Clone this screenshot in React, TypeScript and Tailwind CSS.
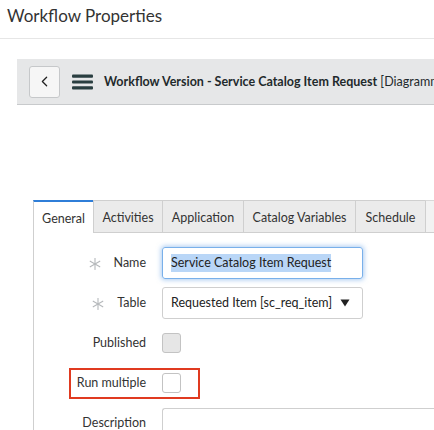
import { ChevronLeft } from 'lucide-react';

// ============================================================================
// Small pieces
// ============================================================================

function Asterisk() {
  return (
    <svg width="12" height="12" viewBox="0 0 12 12" className="shrink-0">
      <g stroke="#b5b8bb" strokeWidth="1.1" strokeLinecap="round">
        <line x1="6" y1="0.5" x2="6" y2="11.5" />
        <line x1="1.2" y1="3.2" x2="10.8" y2="8.8" />
        <line x1="1.2" y1="8.8" x2="10.8" y2="3.2" />
      </g>
    </svg>
  );
}

function Hamburger() {
  return (
    <svg width="21" height="16" viewBox="0 0 21 16">
      <rect x="0" y="0.5" width="21" height="3.2" rx="1" fill="#293e40" />
      <rect x="0" y="6.4" width="21" height="3.2" rx="1" fill="#293e40" />
      <rect x="0" y="12.3" width="21" height="3.2" rx="1" fill="#293e40" />
    </svg>
  );
}

function Triangle() {
  return (
    <svg width="10" height="8" viewBox="0 0 10 8">
      <path d="M0.5 0.5 L9.5 0.5 L5 7.5 Z" fill="#222" />
    </svg>
  );
}

const tabs = [
  { name: 'Activities', w: 'w-[69px]' },
  { name: 'Application', w: 'w-[81px]' },
  { name: 'Catalog Variables', w: 'w-[112px]' },
  { name: 'Schedule', w: 'w-[70px]' },
];

function Label({ text, required }: { text: string; required?: boolean }) {
  return (
    <div className="flex items-center justify-end gap-[13px] pt-[1px] text-[12.5px] text-[#333]">
      {required && <Asterisk />}
      <span>{text}</span>
    </div>
  );
}

// ============================================================================
// Component
// ============================================================================

export default function App() {
  return (
    <div
      className="w-[434px] h-[430px] overflow-hidden bg-white text-[#333]"
      style={{ fontFamily: 'Lato, "Open Sans", sans-serif' }}
    >
      {/* Title */}
      <div className="h-[39px] border-b border-[#e6e6e6] pl-[7px] pt-[3px] text-[17px] text-[#333]">
        Workflow Properties
      </div>

      {/* Record header bar */}
      <div className="mt-[20px] ml-[17px] h-[46px] bg-[#e6e7e8] border-b border-[#c8cacc] flex items-center pl-[12px] whitespace-nowrap overflow-hidden">
        <div className="w-[31px] h-[32px] rounded-[3px] border border-[#c6c8ca] bg-[#f6f6f6] flex items-center justify-center shrink-0">
          <ChevronLeft size={17} strokeWidth={1.8} color="#222" />
        </div>
        <div className="ml-[12px] shrink-0 flex items-center">
          <Hamburger />
        </div>
        <div className="ml-[11px] pt-[2px] text-[12.5px] text-[#1f2a2c]">
          <span className="font-bold">Workflow Version - Service Catalog Item Request</span>
          <span> [Diagramm</span>
        </div>
      </div>

      {/* Tabs */}
      <div className="mt-[95px] ml-[33px] flex h-[33px] whitespace-nowrap">
        <div className="w-[60px] shrink-0 border-t-2 border-t-[#2f7ed8] border-l border-l-[#cfcfcf] bg-white flex items-center justify-center pt-[4px] text-[12.5px] text-[#333]">
          General
        </div>
        {tabs.map((t) => (
          <div
            key={t.name}
            className={`${t.w} shrink-0 border-t border-t-[#cfcfcf] border-l border-l-[#cfcfcf] border-b border-b-[#cfcfcf] bg-[#ebebeb] flex items-center justify-center pt-[4px] text-[12.5px] text-[#333]`}
          >
            {t.name}
          </div>
        ))}
        <div className="flex-1 border-t border-t-[#d8d8d8] border-l border-l-[#cfcfcf] border-b border-b-[#cfcfcf] bg-[#f2f2f2]" />
      </div>

      {/* Form panel */}
      <div className="relative ml-[33px] h-[200px] border-l border-[#cfcfcf] pt-[14px]">
        <div className="grid grid-cols-[112px_1fr] gap-x-4 gap-y-2 auto-rows-[32px] items-center">
          <Label text="Name" required />
          <div className="w-[201px] h-[32px] rounded-[3px] border border-[#79b0ea] shadow-[0_0_5px_1px_rgba(100,160,230,0.55)] flex items-center pl-[8px] text-[12.5px]">
            <span className="bg-[#b9d6f7] text-[#222]">Service Catalog Item Request</span>
          </div>

          <Label text="Table" required />
          <div className="w-[201px] h-[32px] rounded-[3px] border border-[#cfcfcf] flex items-center justify-between pl-[8px] pr-[12px] text-[12.5px] text-[#222]">
            <span>Requested Item [sc_req_item]</span>
            <Triangle />
          </div>

          <Label text="Published" />
          <div className="w-[19px] h-[20px] rounded-[3px] border border-[#c3c3c3] bg-[#e6e6e6]" />

          <Label text="Run multiple" />
          <div className="w-[19px] h-[20px] rounded-[3px] border border-[#c3c3c3] bg-white" />

          <Label text="Description" />
          <div className="h-[40px] self-start mt-[1px] rounded-l-[3px] border border-r-0 border-[#cfcfcf]" />
        </div>

        {/* Annotation around Run multiple */}
        <div className="absolute left-[35px] top-[135px] w-[131px] h-[31px] border-2 border-[#e03a20]" />
      </div>
    </div>
  );
}
